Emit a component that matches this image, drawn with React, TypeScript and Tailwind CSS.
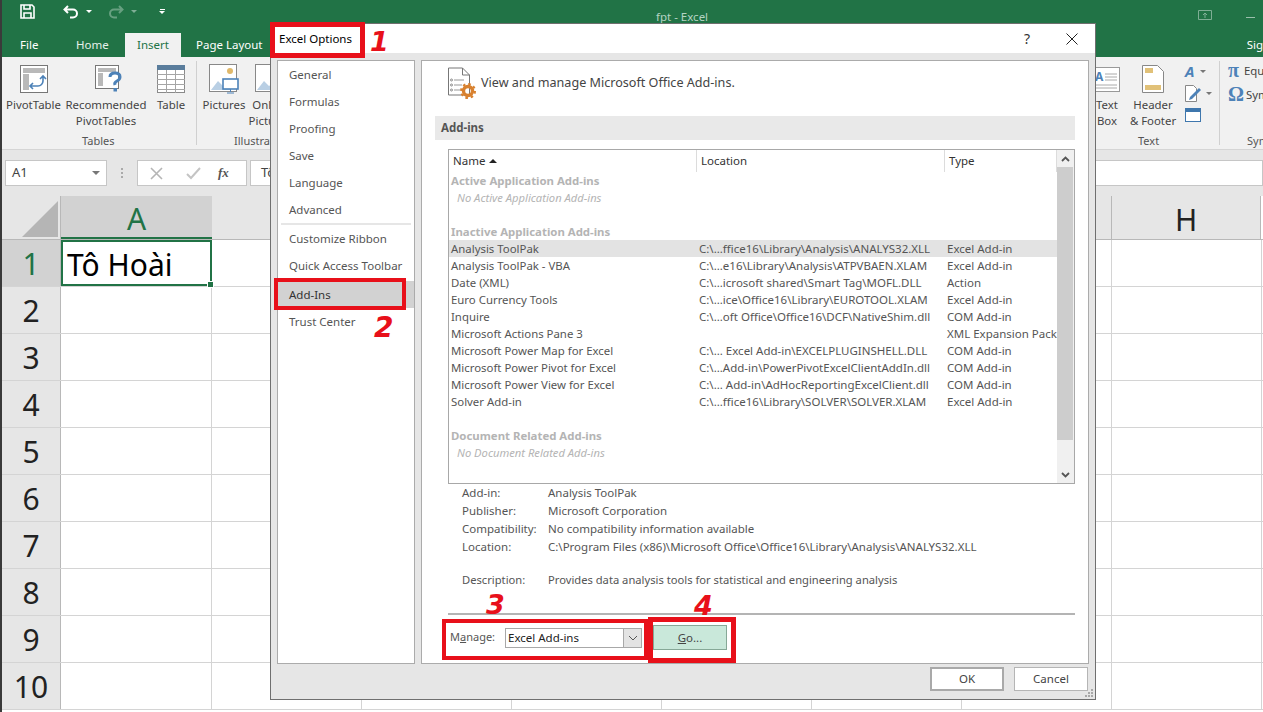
const ui = { fontFamily: '"Noto Sans", "Open Sans", sans-serif' }

const navTop = ['General', 'Formulas', 'Proofing', 'Save', 'Language', 'Advanced']
const rowNums = [2, 3, 4, 5, 6, 7, 8, 9, 10]
const colWidths = ['w-[150px]', 'w-[150px]', 'w-[150px]', 'w-[150px]', 'w-[150px]', 'w-[150px]', 'w-[150px]']

const addIns = [
  ['Analysis ToolPak', 'C:\\...ffice16\\Library\\Analysis\\ANALYS32.XLL', 'Excel Add-in'],
  ['Analysis ToolPak - VBA', 'C:\\...e16\\Library\\Analysis\\ATPVBAEN.XLAM', 'Excel Add-in'],
  ['Date (XML)', 'C:\\...icrosoft shared\\Smart Tag\\MOFL.DLL', 'Action'],
  ['Euro Currency Tools', 'C:\\...ice\\Office16\\Library\\EUROTOOL.XLAM', 'Excel Add-in'],
  ['Inquire', 'C:\\...oft Office\\Office16\\DCF\\NativeShim.dll', 'COM Add-in'],
  ['Microsoft Actions Pane 3', '', 'XML Expansion Pack'],
  ['Microsoft Power Map for Excel', 'C:\\... Excel Add-in\\EXCELPLUGINSHELL.DLL', 'COM Add-in'],
  ['Microsoft Power Pivot for Excel', 'C:\\...Add-in\\PowerPivotExcelClientAddIn.dll', 'COM Add-in'],
  ['Microsoft Power View for Excel', 'C:\\... Add-in\\AdHocReportingExcelClient.dll', 'COM Add-in'],
  ['Solver Add-in', 'C:\\...ffice16\\Library\\SOLVER\\SOLVER.XLAM', 'Excel Add-in'],
]

const details = [
  ['Add-in:', 'Analysis ToolPak'],
  ['Publisher:', 'Microsoft Corporation'],
  ['Compatibility:', 'No compatibility information available'],
  ['Location:', 'C:\\Program Files (x86)\\Microsoft Office\\Office16\\Library\\Analysis\\ANALYS32.XLL'],
]

function QuickAccess() {
  return (
    <div className="flex h-[23px] items-center pl-[18px] relative">
      <svg width="15" height="15" viewBox="0 0 15 15" fill="none" stroke="#fff" strokeWidth="1.6">
        <path d="M1 1h11l2 2v11H1z" />
        <path d="M4 1v4h6V1M4 14V9h7v5" />
      </svg>
      <svg className="ml-[28px]" width="16" height="14" viewBox="0 0 16 14" fill="none" stroke="#fff" strokeWidth="2">
        <path d="M5 1 1.5 4.5 5 8M2 4.5h8a4 4 0 0 1 0 8H7" />
      </svg>
      <span className="ml-[7px] w-0 h-0 border-x-[3px] border-x-transparent border-t-[3px] border-t-white" />
      <svg className="ml-[16px] opacity-40" width="16" height="14" viewBox="0 0 16 14" fill="none" stroke="#cfe3d8" strokeWidth="2">
        <path d="M11 1l3.5 3.5L11 8M14 4.5H6a4 4 0 0 0 0 8h3" />
      </svg>
      <span className="ml-[7px] w-0 h-0 border-x-[3px] border-x-transparent border-t-[3px] border-t-[#7fae95]" />
      <div className="ml-[22px] flex flex-col items-center gap-[1px]">
        <span className="w-[5px] h-[1px] bg-white" />
        <span className="w-0 h-0 border-x-[3px] border-x-transparent border-t-[3px] border-t-white" />
      </div>
      <div className="absolute left-[654px] top-[7px] text-[11.5px] leading-[20px] text-[#b5d3c3]">fpt - Excel</div>
      <svg className="absolute left-[1196px] top-[10px]" width="14" height="10" viewBox="0 0 14 10" fill="none" stroke="#7fae95">
        <path d="M.5.5h13v9H.5zM7 8V3M5 5l2-2 2 2" />
      </svg>
      <span className="absolute left-[1244px] top-[17px] w-[9px] h-px bg-[#9bbfac]" />
    </div>
  )
}

function RibbonButton({ label, second, icon, w }: { label: string; second?: string; icon: React.ReactNode; w: string }) {
  return (
    <div className={`flex flex-col items-center shrink-0 ${w}`}>
      <div className="h-[30px] flex items-center justify-center">{icon}</div>
      <div className="text-[11.4px] leading-[16px] mt-[3px] text-[#444] whitespace-nowrap">{label}</div>
      {second && <div className="text-[11.4px] leading-[16px] text-[#444] whitespace-nowrap">{second}</div>}
    </div>
  )
}

function Ribbon() {
  return (
    <div className="h-[93px] bg-[#f1f1f1] border-b border-[#d5d5d5] flex justify-between relative">
      <div className="flex">
        <div className="w-[195px] relative flex pl-[3px] pt-[7px]">
          <RibbonButton
            w="w-[57px]"
            label="PivotTable"
            icon={
              <svg width="28" height="28" viewBox="0 0 28 28" fill="none">
                <rect x=".5" y=".5" width="27" height="27" fill="#fff" stroke="#777" />
                <rect x="3" y="3" width="22" height="5" fill="#b9b9b9" />
                <rect x="3" y="9" width="6" height="16" fill="#b9b9b9" />
                <path d="M11 21h7a5 5 0 0 0 5-5v-4M20 14l3-3 3 3M13 18l-3 3 3 3" stroke="#4d82b8" strokeWidth="1.6" />
              </svg>
            }
          />
          <RibbonButton
            w="w-[88px]"
            label="Recommended"
            second="PivotTables"
            icon={
              <svg className="ml-[6px]" width="28" height="30" viewBox="0 0 28 30" fill="none">
                <rect x=".5" y="1.5" width="23" height="23" fill="#fff" stroke="#777" />
                <rect x="3" y="4" width="18" height="4" fill="#b9b9b9" />
                <rect x="3" y="9" width="5" height="13" fill="#b9b9b9" />
                <path d="M15 13q0-4 5-4t5 4q0 2.5-3 4t-2 4" stroke="#4d82b8" strokeWidth="3" />
                <rect x="18.5" y="24" width="3.5" height="3.5" fill="#4d82b8" />
              </svg>
            }
          />
          <RibbonButton
            w="w-[42px]"
            label="Table"
            icon={
              <svg width="28" height="28" viewBox="0 0 28 28" fill="none">
                <rect x=".5" y=".5" width="27" height="27" fill="#fff" stroke="#8a8a8a" />
                <rect x="0" y="0" width="28" height="5" fill="#5a7d9c" />
                <path d="M0 9.5h28M0 14.5h28M0 19.5h28M0 24.5h28M9.5 5v23M18.5 5v23" stroke="#a5a5a5" />
              </svg>
            }
          />
          <div className="absolute right-0 bottom-[4px] top-[4px] w-px bg-[#d0d0d0]" />
          <div className="absolute left-[80px] bottom-0 text-[11px] leading-[16px] text-[#555]">Tables</div>
        </div>
        <div className="flex pl-[5px] pt-[7px] relative">
          <RibbonButton
            w="w-[44px]"
            label="Pictures"
            icon={
              <svg width="30" height="30" viewBox="0 0 30 30" fill="none">
                <rect x=".5" y=".5" width="27" height="27" fill="#fff" stroke="#888" />
                <circle cx="21" cy="7" r="3" fill="#e0b86a" />
                <path d="M2 26l7-9 5 5 3-2 5 6z" fill="#b9cfe4" />
                <rect x="14" y="15" width="15" height="10" fill="#fff" stroke="#4d82b8" strokeWidth="1.6" />
                <path d="M21.5 25v3M18 29h7" stroke="#4d82b8" />
              </svg>
            }
          />
          <RibbonButton
            w="w-[48px]"
            label="Online"
            second="Pictures"
            icon={
              <svg width="30" height="30" viewBox="0 0 30 30" fill="none">
                <rect x=".5" y=".5" width="27" height="27" fill="#fff" stroke="#888" />
                <path d="M2 26l7-9 5 5 3-2 5 6z" fill="#b9cfe4" />
              </svg>
            }
          />
          <div className="absolute left-[37px] bottom-0 text-[11px] leading-[16px] text-[#555] whitespace-nowrap">Illustrations</div>
        </div>
      </div>

      <div className="flex pt-[7px]">
        <div className="w-[124px] flex relative">
          <div className="w-[22px] shrink-0 flex flex-col items-center">
            <div className="h-[30px] flex items-center justify-center">
              <svg className="shrink-0" width="26" height="25" viewBox="0 0 26 25" fill="none">
                <rect x=".5" y=".5" width="25" height="24" fill="#fff" stroke="#999" />
                <path d="M11 7h12M11 10h12M11 13h12M2 18h21M2 21h21" stroke="#aaa" />
                <text x="1" y="14" fontSize="12" fontWeight="700" fill="#4d82b8" fontFamily="Noto Sans, sans-serif">A</text>
              </svg>
            </div>
            <div className="text-[11.4px] leading-[16px] mt-[3px] text-[#444]">Text</div>
            <div className="text-[11.4px] leading-[16px] text-[#444]">Box</div>
          </div>
          <div className="ml-[4px] flex">
            <RibbonButton
              w="w-[62px]"
              label="Header"
              second="& Footer"
              icon={
                <svg width="22" height="28" viewBox="0 0 22 28" fill="none">
                  <path d="M.5.5h15l6 6v21H.5z" fill="#fff" stroke="#888" />
                  <rect x="3" y="3" width="8" height="5" fill="#e1c178" />
                  <rect x="3" y="20" width="16" height="5" fill="#e1c178" />
                </svg>
              }
            />
          </div>
          <div className="flex flex-col mt-[-1px] ml-[1px]">
            <div className="flex items-center gap-[6px] h-[16px]">
              <span className="text-[15px] font-bold italic leading-[16px] text-[#4d82b8]">A</span>
              <span className="w-0 h-0 border-x-[3px] border-x-transparent border-t-[3px] border-t-[#777]" />
            </div>
            <div className="flex items-center gap-[4px] h-[17px] mt-[6px]">
              <svg width="17" height="17" viewBox="0 0 17 17" fill="none">
                <path d="M.5.5h8l3 3v13H.5z" fill="#fff" stroke="#888" />
                <path d="M5 12 14 3l2 2-9 9-3 1z" fill="#4d82b8" />
              </svg>
              <span className="w-0 h-0 border-x-[3px] border-x-transparent border-t-[3px] border-t-[#777]" />
            </div>
            <div className="w-[16px] h-[14px] border border-[#3f77ad] bg-white mt-[6px]">
              <div className="h-[3px] bg-[#3f77ad]" />
            </div>
          </div>
          <div className="absolute right-[0px] bottom-[4px] top-[-3px] w-px bg-[#d0d0d0]" />
          <div className="absolute left-[42px] bottom-0 text-[11px] leading-[16px] text-[#555]">Text</div>
        </div>
        <div className="w-[43px] pl-[8px] relative mt-[-2px]">
          <div className="flex items-center gap-[5px] h-[17px] text-[11.4px] text-[#444] whitespace-nowrap">
            <span className="w-[13px] text-[20px] font-bold leading-[17px] text-[#4d82b8]" style={{ fontFamily: '"Liberation Serif", serif' }}>π</span>
            Equ
          </div>
          <div className="flex items-center gap-[4px] h-[17px] mt-[7px] text-[11.4px] text-[#444] whitespace-nowrap">
            <span className="w-[14px] text-[20px] font-bold leading-[17px] text-[#4d82b8]" style={{ fontFamily: '"Liberation Serif", serif' }}>Ω</span>
            Sym
          </div>
          <div className="absolute left-[27px] bottom-0 text-[11px] leading-[16px] text-[#555]">Sym</div>
        </div>
      </div>
    </div>
  )
}

function FormulaBar() {
  return (
    <div className="h-[46px] bg-[#e6e6e6] flex pt-[10px] pl-[3px] items-start">
      <div className="w-[102px] h-[26px] bg-white border border-[#c6c6c6] flex items-center justify-between px-[6px] text-[13px] text-[#444]">
        A1
        <span className="w-0 h-0 border-x-[4px] border-x-transparent border-t-[4px] border-t-[#777]" />
      </div>
      <div className="w-[30px] flex justify-center gap-[2px] flex-col items-center h-[26px]">
        <span className="w-[2px] h-[2px] bg-[#aaa]" />
        <span className="w-[2px] h-[2px] bg-[#aaa]" />
        <span className="w-[2px] h-[2px] bg-[#aaa]" />
      </div>
      <div className="w-[110px] h-[26px] bg-white border border-[#c6c6c6] flex items-center pl-[12px]">
        <svg width="13" height="13" viewBox="0 0 13 13" stroke="#b5b5b5" strokeWidth="1.6" fill="none"><path d="M1 1l11 11M12 1 1 12" /></svg>
        <svg className="ml-[23px]" width="15" height="13" viewBox="0 0 15 13" stroke="#c4c4c4" strokeWidth="2" fill="none"><path d="M1 7l4 4 9-10" /></svg>
        <span className="ml-[17px] text-[13px] italic font-bold text-[#555]" style={{ fontFamily: '"Liberation Serif", serif' }}>fx</span>
      </div>
      <div className="flex-1 ml-[3px] h-[26px] bg-white border border-[#c6c6c6] flex items-center pl-[10px] text-[13px] text-[#444]">Tô Hoài</div>
    </div>
  )
}

function Sheet() {
  return (
    <div className="flex-1 bg-white">
      <div className="flex h-[44px] border-b border-[#b8b8b8]">
        <div className="w-[59px] bg-[#e6e6e6] border-r border-[#b8b8b8] flex items-end justify-end pr-[2px] pb-[2px] shrink-0">
          <div className="w-0 h-0 border-l-[36px] border-l-transparent border-b-[36px] border-b-[#b5b5b5]" />
        </div>
        <div className="w-[151px] bg-[#d2d2d2] border-b-2 border-[#217346] flex items-center justify-center pt-[3px] text-[30px] text-[#217346] shrink-0">A</div>
        <div className="w-[899px] bg-[#e6e6e6] shrink-0" />
        <div className="w-[150px] bg-[#e6e6e6] border-x border-[#b8b8b8] flex items-center justify-center pt-[3px] text-[30px] text-[#222] shrink-0">H</div>
      </div>
      <div className="flex h-[47px] border-b border-[#d4d4d4]">
        <div className="w-[59px] bg-[#d2d2d2] border-r border-[#b8b8b8] flex items-center justify-center text-[30px] text-[#217346] shrink-0">1</div>
        <div className="relative w-[151px] border-2 border-[#217346] flex items-center pl-[4px] pt-[2px] text-[30px] text-black shrink-0 whitespace-nowrap">
          Tô Hoài
          <span className="absolute right-[-4px] bottom-[-4px] w-[5px] h-[5px] bg-[#217346] border border-white box-content" />
        </div>
        {colWidths.map((w, i) => (
          <div key={i} className={`${w} border-r border-[#d4d4d4] shrink-0`} />
        ))}
      </div>
      {rowNums.map((n) => (
        <div key={n} className="flex h-[47px] border-b border-[#d4d4d4]">
          <div className="w-[59px] bg-[#e6e6e6] border-r border-[#b8b8b8] flex items-center justify-center text-[30px] text-[#222] shrink-0">{n}</div>
          <div className="w-[151px] border-r border-[#d4d4d4] shrink-0" />
          {colWidths.map((w, i) => (
            <div key={i} className={`${w} border-r border-[#d4d4d4] shrink-0`} />
          ))}
        </div>
      ))}
    </div>
  )
}

function NavItem({ label, active }: { label: string; active?: boolean }) {
  return (
    <div className={`h-[27px] flex items-center pl-[11px] text-[11.5px] ${active ? 'bg-[#d2d2d2] text-[#333] mt-[2px]' : 'text-[#555]'}`}>
      {label}
    </div>
  )
}

function ListRow({ cells, active }: { cells: string[]; active?: boolean }) {
  return (
    <div className={`h-[17px] flex items-center text-[11.4px] leading-[17px] text-[#555] whitespace-nowrap ${active ? 'bg-[#e3e3e3]' : ''}`}>
      <div className="w-[248px] pl-[2px] shrink-0">{cells[0]}</div>
      <div className="w-[248px] pl-[2px] shrink-0 text-[11.5px]">{cells[1]}</div>
      <div className="pl-[2px] text-[11.5px]">{cells[2]}</div>
    </div>
  )
}

function GroupHead({ label, empty }: { label: string; empty: string }) {
  return (
    <>
      <div className="h-[17px] pl-[2px] text-[11.4px] leading-[17px] font-bold text-[#b4b4b4]">{label}</div>
      <div className="h-[17px] pl-[8px] text-[11.2px] leading-[17px] italic text-[#b4b4b4]">{empty}</div>
    </>
  )
}

function AddInList() {
  return (
    <div className="ml-[26px] mr-[13px] mt-[9px] h-[335px] border border-[#a8a8a8] flex bg-white">
      <div className="w-[608px] shrink-0">
        <div className="h-[22px] flex items-center text-[11.5px] text-[#333]">
          <div className="w-[248px] pl-[4px] h-full flex items-center gap-[4px] border-r border-[#dcdcdc]">
            Name
            <span className="w-0 h-0 border-x-[4px] border-x-transparent border-b-[4px] border-b-[#222]" />
          </div>
          <div className="w-[248px] pl-[4px] h-full flex items-center border-r border-[#dcdcdc]">Location</div>
          <div className="pl-[4px] flex-1 h-full flex items-center border-r border-[#dcdcdc]">Type</div>
        </div>
        <div>
          <GroupHead label="Active Application Add-ins" empty="No Active Application Add-ins" />
          <div className="h-[17px]" />
          <div className="h-[17px] pl-[2px] text-[11.4px] leading-[17px] font-bold text-[#b4b4b4]">Inactive Application Add-ins</div>
          {addIns.map((row, i) => (
            <ListRow key={row[0]} cells={row} active={i === 0} />
          ))}
          <div className="h-[17px]" />
          <GroupHead label="Document Related Add-ins" empty="No Document Related Add-ins" />
        </div>
      </div>
      <div className="flex-1 bg-[#f0f0f0] flex flex-col">
        <div className="h-[17px] flex items-center justify-center">
          <svg width="9" height="6" viewBox="0 0 9 6" fill="none" stroke="#555" strokeWidth="1.8"><path d="M1 5l3.5-3.5L8 5" /></svg>
        </div>
        <div className="h-[273px] bg-[#cdcdcd] mr-[1px]" />
        <div className="flex-1 flex items-end justify-center pb-[5px]">
          <svg width="9" height="6" viewBox="0 0 9 6" fill="none" stroke="#555" strokeWidth="1.8"><path d="M1 1l3.5 3.5L8 1" /></svg>
        </div>
      </div>
    </div>
  )
}

function Dialog() {
  return (
    <div className="absolute left-[270px] top-[23px] w-[826px] h-[677px] bg-[#e6e6e6] border border-[#6f6f6f] flex flex-col">
      <div className="h-[29px] bg-white flex items-center justify-between text-[11.5px] text-black shrink-0">
        <div className="pl-[8px]">Excel Options</div>
        <div className="flex items-center">
          <span className="text-[14px] text-[#333]">?</span>
          <svg className="ml-[36px] mr-[17px]" width="12" height="12" viewBox="0 0 12 12" stroke="#222" fill="none"><path d="M.5.5l11 11M11.5.5l-11 11" /></svg>
        </div>
      </div>
      <div className="flex gap-[6px] mt-[7px] ml-[6px] shrink-0">
        <div className="w-[138px] h-[604px] bg-white border border-[#ababab]">
          <div>
            {navTop.map((n) => (
              <NavItem key={n} label={n} />
            ))}
          </div>
          <div className="h-[2px] bg-[#e6e6e6] mx-[3px]" />
          <div>
            <NavItem label="Customize Ribbon" />
            <NavItem label="Quick Access Toolbar" />
            <NavItem label="Add-Ins" active />
            <NavItem label="Trust Center" />
          </div>
        </div>
        <div className="w-[668px] h-[604px] bg-white border border-[#ababab]">
          <div className="h-[55px] flex items-center pl-[26px] pb-[11px]">
            <svg width="28" height="32" viewBox="0 0 28 32" fill="none">
              <path d="M.5 1h14l7 7v20H.5z" fill="#fff" stroke="#777" />
              <path d="M14.5 1v7h7" stroke="#777" />
              <path d="M6 13h10M6 18h8M6 23h6" stroke="#999" />
              <circle cx="3.5" cy="13" r="1" stroke="#888" />
              <circle cx="3.5" cy="18" r="1" stroke="#888" />
              <circle cx="3.5" cy="23" r="1" stroke="#888" />
              <circle cx="20" cy="24" r="4.5" stroke="#d8812f" strokeWidth="3.4" />
              <circle cx="20" cy="24" r="7" stroke="#d8812f" strokeWidth="2" strokeDasharray="2.6 2.9" />
            </svg>
            <div className="ml-[5px] text-[12.6px] text-[#444]">View and manage Microsoft Office Add-ins.</div>
          </div>
          <div className="mx-[13px] h-[24px] bg-[#e9e9e9] flex items-center pl-[6px] text-[11.5px] font-bold text-[#555]">Add-ins</div>
          <AddInList />
          <div className="pl-[40px]">
            {details.map(([k, v]) => (
              <div key={k} className="flex h-[18px] items-center text-[11.5px] text-[#555] whitespace-nowrap">
                <div className="w-[86px] shrink-0">{k}</div>
                <div>{v}</div>
              </div>
            ))}
            <div className="h-[15px]" />
            <div className="flex h-[18px] items-center text-[11.2px] text-[#555] whitespace-nowrap">
              <div className="w-[86px] shrink-0">Description:</div>
              <div>Provides data analysis tools for statistical and engineering analysis</div>
            </div>
          </div>
          <div className="ml-[26px] mr-[13px] mt-[24px] h-[2px] bg-[#b4b4b4]" />
          <div className="flex pl-[28px] pt-[10px] items-center">
            <div className="w-[55px] text-[11px] text-[#555]">
              M<span className="underline">a</span>nage:
            </div>
            <div className="w-[137px] h-[20px] border border-[#a8a8a8] flex items-center pl-[2px] text-[11.5px] text-[#222]">
              <div className="flex-1">Excel Add-ins</div>
              <div className="w-[18px] h-full bg-[#e3e3e3] border-l border-[#a8a8a8] flex items-center justify-center">
                <svg width="10" height="6" viewBox="0 0 10 6" fill="none" stroke="#555"><path d="M1 1l4 4 4-4" /></svg>
              </div>
            </div>
            <div className="ml-[11px] w-[74px] h-[25px] bg-[#c9e8da] border border-[#86a897] flex items-center justify-center text-[11.5px] text-[#444]">
              <span className="underline">G</span>o...
            </div>
          </div>
        </div>
      </div>
      <div className="flex-1 flex justify-end gap-[10px] pr-[7px] pt-[3px]">
        <div className="w-[74px] h-[24px] bg-white border-2 border-[#a9a9a9] flex items-center justify-center text-[11.5px] text-[#444]">OK</div>
        <div className="w-[74px] h-[24px] bg-white border border-[#b5b5b5] flex items-center justify-center text-[11.5px] text-[#444]">Cancel</div>
      </div>
      <svg className="absolute right-[1px] bottom-[1px]" width="9" height="9" viewBox="0 0 9 9" fill="#a8a8a8">
        <rect x="6" y="0" width="2" height="2" />
        <rect x="3" y="3" width="2" height="2" />
        <rect x="6" y="3" width="2" height="2" />
        <rect x="0" y="6" width="2" height="2" />
        <rect x="3" y="6" width="2" height="2" />
        <rect x="6" y="6" width="2" height="2" />
      </svg>
    </div>
  )
}

function Annotations() {
  const num = 'absolute italic font-bold text-[#e8101a] leading-none'
  const brush = { fontFamily: '"DejaVu Sans", sans-serif' }
  return (
    <>
      <div className="absolute left-[270px] top-[22px] w-[95px] h-[36px] border-[5px] border-[#e8101a]" />
      <div className="absolute left-[274px] top-[278px] w-[132px] h-[32px] border-[4px] border-[#e8101a]" />
      <div className="absolute left-[442px] top-[619px] w-[206px] h-[41px] border-[4px] border-[#e8101a]" />
      <div className="absolute left-[648px] top-[617px] w-[88px] h-[46px] border-[5px] border-[#e8101a]" />
      <span className={`${num} left-[370px] top-[28px] text-[27px]`} style={brush}>1</span>
      <span className={`${num} left-[374px] top-[314px] text-[28px]`} style={brush}>2</span>
      <span className={`${num} left-[486px] top-[591px] text-[27px]`} style={brush}>3</span>
      <span className={`${num} left-[694px] top-[592px] text-[27px]`} style={brush}>4</span>
    </>
  )
}

export default function App() {
  return (
    <div className="relative w-[1263px] h-[712px] overflow-hidden bg-[#217346] flex" style={ui}>
      <div className="w-[2px] bg-[#3a3a3a] shrink-0" />
      <div className="flex-1 flex flex-col min-w-0">
        <div className="bg-[#217346] h-[57px] shrink-0">
          <QuickAccess />
          <div className="flex h-[34px] items-end text-[11.5px] text-white relative">
            <div className="w-[54px] h-[26px] pl-[18px] leading-[28px]">File</div>
            <div className="w-[69px] h-[26px] pl-[20px] leading-[28px] text-[#e6f0ea]">Home</div>
            <div className="w-[56px] h-[24px] bg-[#f1f1f1] text-[#217346] text-center leading-[24px]">Insert</div>
            <div className="ml-[15px] h-[26px] leading-[28px] whitespace-nowrap">Page Layout</div>
            <div className="absolute right-0 bottom-0 h-[26px] leading-[28px]">Sig</div>
          </div>
        </div>
        <Ribbon />
        <FormulaBar />
        <Sheet />
      </div>
      <Dialog />
      <Annotations />
    </div>
  )
}
